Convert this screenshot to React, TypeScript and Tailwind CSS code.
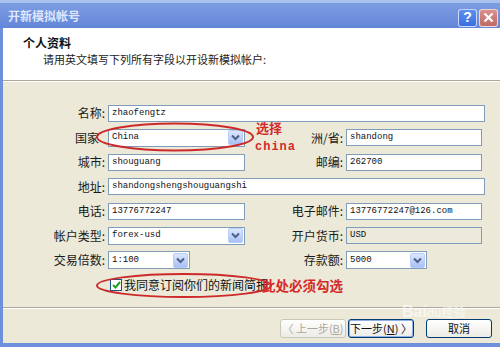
import React from 'react';

const cjk = "font-['Noto_Sans_CJK_SC',sans-serif]";
const mono = "font-['Liberation_Mono',monospace]";

function Label({ text, w, pr = 'pr-[3px]' }: { text: string; w: string; pr?: string }) {
  return (
    <div className={`${w} ${pr} shrink-0 text-right text-[12px] leading-none text-[#1a1a1a] ${cjk}`}>{text}</div>
  );
}

function TextBox({ value, w, disabled }: { value: string; w: string; disabled?: boolean }) {
  return (
    <div
      className={`${w} h-[17px] shrink-0 border border-[#7f9db9] flex items-center pl-[3px] text-[9px] text-[#111] ${mono} ${
        disabled ? 'bg-[#ebeadb]' : 'bg-white'
      }`}
    >
      {value}
    </div>
  );
}

function Combo({ value, w }: { value: string; w: string }) {
  return (
    <div className={`${w} h-[18px] shrink-0 border border-[#7f9db9] bg-white flex items-center justify-between`}>
      <span className={`pl-[3px] text-[9px] text-[#111] ${mono}`}>{value}</span>
      <div className="w-[15px] h-[15px] mr-[1px] rounded-[2px] bg-gradient-to-b from-[#dce7fe] to-[#a8c0f4] border border-[#b9cdf6] flex items-center justify-center">
        <svg width="9" height="7" viewBox="0 0 9 7" fill="none">
          <path d="M1 1.5 L4.5 5 L8 1.5" stroke="#4d6185" strokeWidth="2" />
        </svg>
      </div>
    </div>
  );
}

function XpButton({ children, disabled, strong }: { children: React.ReactNode; disabled?: boolean; strong?: boolean }) {
  return (
    <div
      className={`w-[66px] h-[19px] rounded-[3px] flex items-center justify-center text-[11px] ${cjk} bg-gradient-to-b from-white to-[#ecebe6] ${
        disabled
          ? 'border border-[#c9c7ba] text-[#aca899]'
          : strong
          ? 'border border-[#003c74] text-[#111] shadow-[inset_0_0_0_1px_#8fb1e8]'
          : 'border border-[#003c74] text-[#111]'
      }`}
    >
      {children}
    </div>
  );
}

export default function App() {
  return (
    <div className="relative w-[500px] h-[347px] overflow-hidden bg-[#ece9d8] flex flex-col">
      <div className="h-[3px] bg-[#a9c1ee]" />
      {/* title bar */}
      <div className="h-[25px] bg-gradient-to-b from-[#7d9de2] to-[#6486d8] flex items-center justify-between pl-[8px] pr-[2px]">
        <span className={`text-[12px] font-bold text-[#dfe6fb] ${cjk}`}>开新模拟帐号</span>
        <div className="flex gap-[2px] mt-[4px]">
          <div className="w-[19px] h-[18px] rounded-[3px] border border-white/70 bg-gradient-to-b from-[#5d8ef0] to-[#3a6fe0] flex items-center justify-center text-white text-[14px] font-bold font-['Liberation_Sans',sans-serif]">
            ?
          </div>
          <div className="w-[19px] h-[18px] rounded-[3px] border border-white/70 bg-gradient-to-b from-[#d8908c] to-[#bf6a66] flex items-center justify-center">
            <svg width="11" height="11" viewBox="0 0 11 11">
              <path d="M1.5 1.5 L9.5 9.5 M9.5 1.5 L1.5 9.5" stroke="white" strokeWidth="2.2" />
            </svg>
          </div>
        </div>
      </div>

      <div className="flex-1 flex">
        <div className="w-[3px] bg-[#6d8fdc]" />
        <div className="flex-1 flex flex-col">
          {/* header */}
          <div className="h-[52px] bg-white flex flex-col pl-[20px] pt-[8px]">
            <div className={`text-[12px] font-bold text-[#111] leading-[14px] ${cjk}`}>个人资料</div>
            <div className={`text-[11px] text-[#222] leading-[14px] mt-[2px] pl-[20px] ${cjk}`}>
              请用英文填写下列所有字段以开设新模拟帐户:
            </div>
          </div>
          <div className="h-[1px] bg-[#aca899]" />
          <div className="h-[1px] bg-white" />

          {/* form */}
          <div className="flex flex-col pt-[19px]">
            <div className="h-[24.5px] flex items-center">
              <Label text="名称:" w="w-[105px]" />
              <TextBox value="zhaofengtz" w="w-[377px]" />
            </div>
            <div className="h-[24.5px] flex items-center">
              <Label text="国家" w="w-[105px]" pr="pr-[9px]" />
              <Combo value="China" w="w-[137px]" />
              <Label text="洲/省:" w="w-[101px]" />
              <TextBox value="shandong" w="w-[136px]" />
            </div>
            <div className="h-[24.5px] flex items-center">
              <Label text="城市:" w="w-[105px]" />
              <TextBox value="shouguang" w="w-[137px]" />
              <Label text="邮编:" w="w-[101px]" />
              <TextBox value="262700" w="w-[136px]" />
            </div>
            <div className="h-[24.5px] flex items-center">
              <Label text="地址:" w="w-[105px]" />
              <TextBox value="shandongshengshouguangshi" w="w-[377px]" />
            </div>
            <div className="h-[24.5px] flex items-center">
              <Label text="电话:" w="w-[105px]" />
              <TextBox value="13776772247" w="w-[137px]" />
              <Label text="电子邮件:" w="w-[101px]" />
              <TextBox value="13776772247@126.com" w="w-[136px]" />
            </div>
            <div className="h-[24.5px] flex items-center">
              <Label text="帐户类型:" w="w-[105px]" />
              <Combo value="forex-usd" w="w-[137px]" />
              <Label text="开户货币:" w="w-[101px]" />
              <TextBox value="USD" w="w-[136px]" disabled />
            </div>
            <div className="h-[24.5px] flex items-center">
              <Label text="交易倍数:" w="w-[105px]" />
              <div className="w-[137px] shrink-0">
                <Combo value="1:100" w="w-[82px]" />
              </div>
              <Label text="存款额:" w="w-[101px]" />
              <Combo value="5000" w="w-[81px]" />
            </div>
            <div className="h-[24.5px] flex items-center pl-[107px] gap-[2px]">
              <div className="w-[12px] h-[12px] border border-[#1c5180] bg-white flex items-center justify-center">
                <svg width="9" height="8" viewBox="0 0 9 8" fill="none">
                  <path d="M1 4 L3.5 6.5 L8 1" stroke="#21a121" strokeWidth="2" />
                </svg>
              </div>
              <span className={`text-[12px] text-[#111] ${cjk}`}>我同意订阅你们的新闻简报</span>
            </div>
          </div>

          <div className="mt-[10px] h-[1px] bg-[#aca899]" />
          <div className="h-[1px] bg-white" />

          {/* buttons */}
          <div className="flex items-center justify-end pt-[10px] pr-[8px]">
            <XpButton disabled>
              〈 上一步(<span className="underline">B</span>)
            </XpButton>
            <div className="w-[2px]" />
            <XpButton strong>
              下一步(<span className="underline">N</span>) 〉
            </XpButton>
            <div className="w-[12px]" />
            <XpButton>取消</XpButton>
          </div>
        </div>
      </div>
      <div className="h-[4px] bg-[#6d8fdc]" />

      {/* annotations */}
      <svg className="absolute left-0 top-0 pointer-events-none" width="500" height="347">
        <ellipse cx="175" cy="137" rx="78" ry="13.5" fill="none" stroke="#cc2a2a" strokeWidth="2" />
        <ellipse cx="184" cy="285.5" rx="87" ry="11.5" fill="none" stroke="#cc2a2a" strokeWidth="2" />
      </svg>
      <div className={`absolute left-[256px] top-[120px] text-[13px] font-bold leading-[16px] text-[#d42a2a] ${cjk}`}>选择</div>
      <div className="absolute left-[255px] top-[140px] text-[12px] font-bold leading-[14px] tracking-[1px] text-[#d42a2a] font-['Liberation_Mono',monospace]">
        china
      </div>
      <div className={`absolute left-[262px] top-[277px] text-[13.5px] font-bold leading-[16px] text-[#d42a2a] ${cjk}`}>此处必须勾选</div>
      <div className="absolute left-[402px] top-[300px] text-[16px] font-bold text-white/60 font-['Liberation_Sans',sans-serif] pointer-events-none">
        Bai<span className="text-[12px]">du</span>
        <span className={`text-[12px] ${cjk}`}>经验</span>
      </div>
    </div>
  );
}
